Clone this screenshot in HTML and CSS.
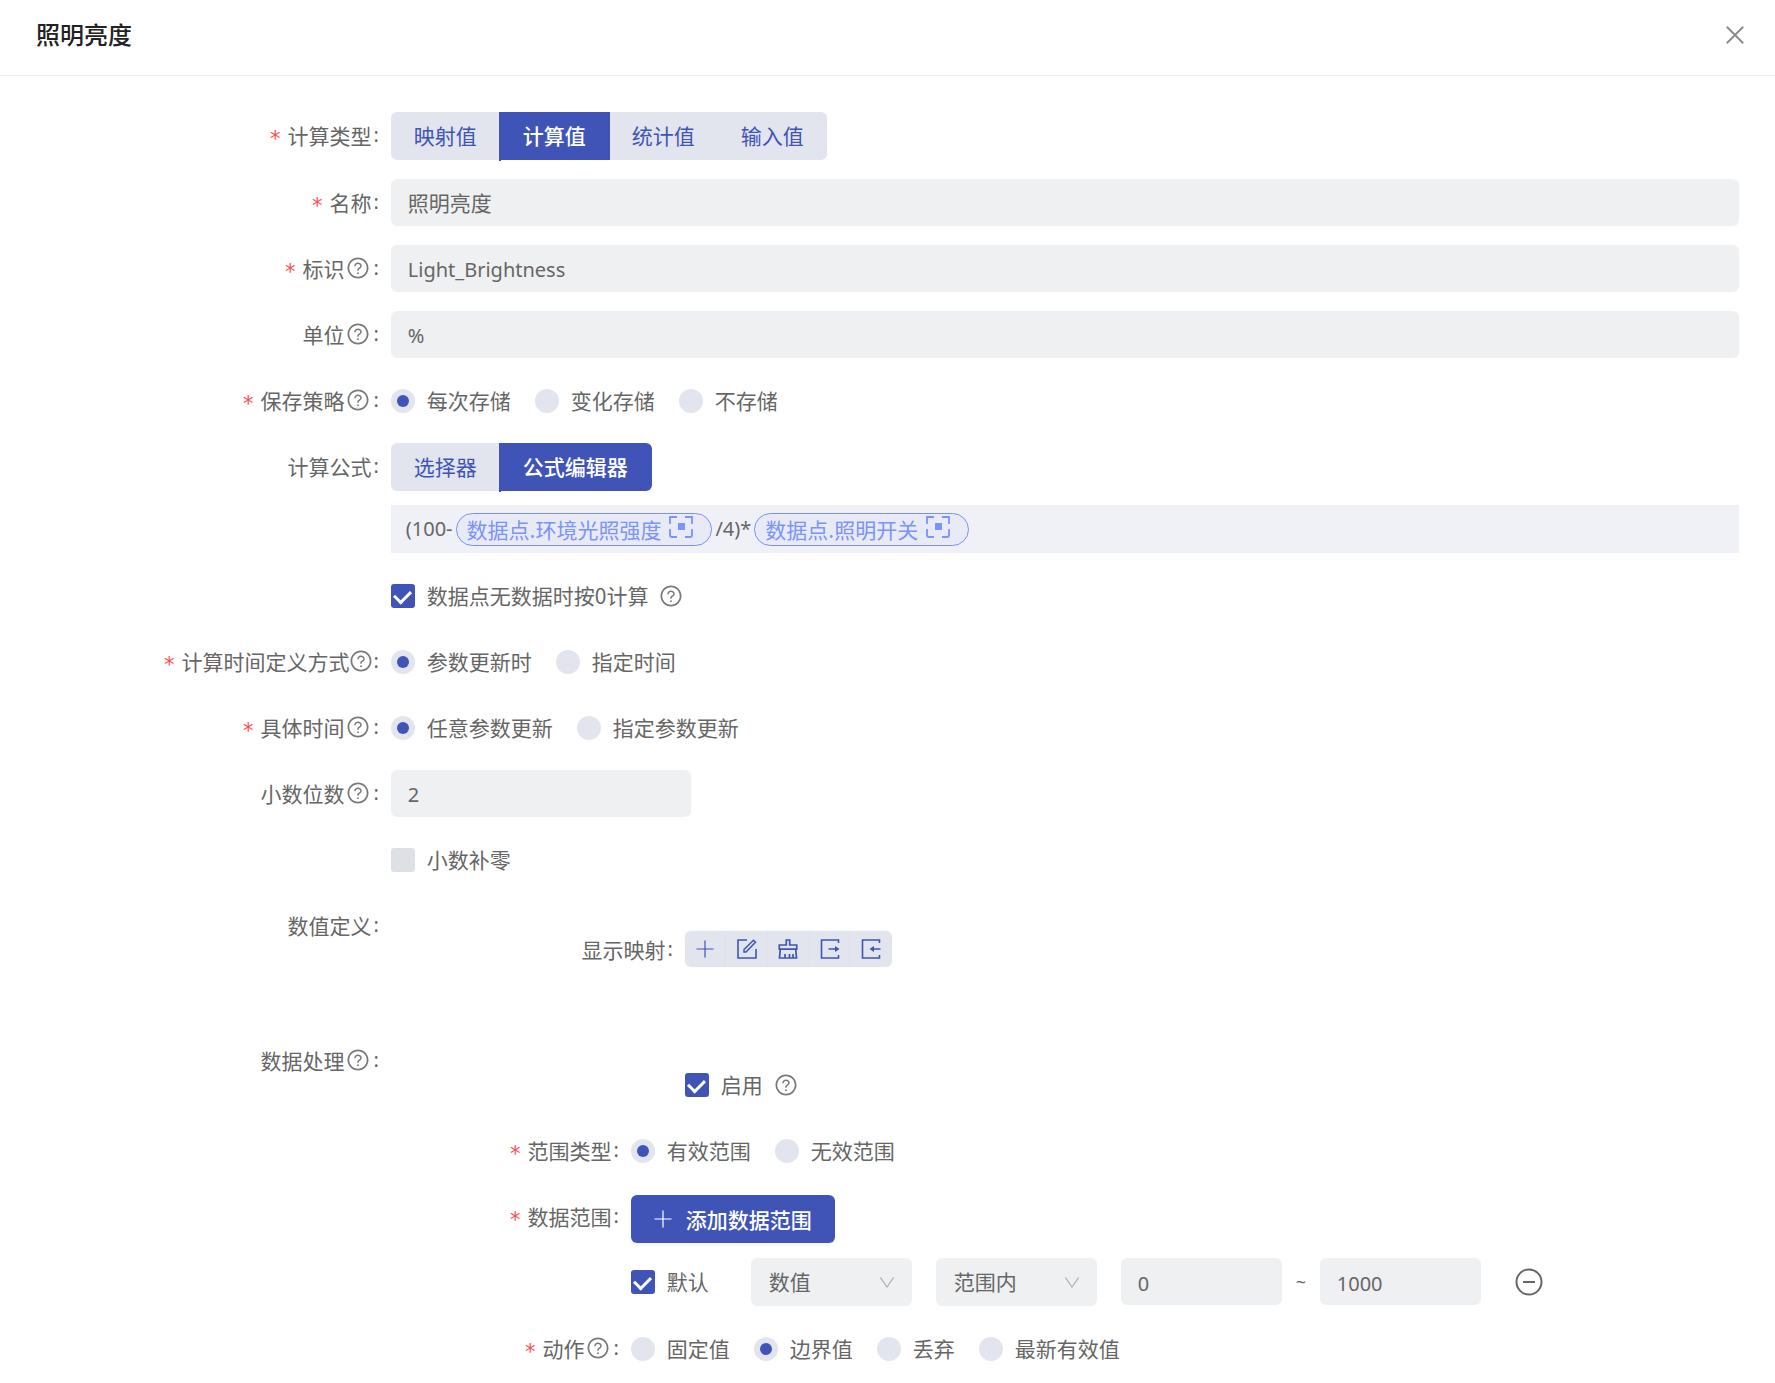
FILE: index.html
```html
<!DOCTYPE html>
<html lang="zh-CN">
<head>
<meta charset="utf-8">
<meta name="viewport" content="width=device-width, initial-scale=1">
<title>照明亮度</title>
<link rel="stylesheet" href="styles.css">
</head>
<body>
<svg class="sprite" aria-hidden="true">
  <symbol id="i-help" viewBox="0 0 1024 1024"><path d="M512 64C264.600 64 64 264.600 64 512s200.600 448 448 448 448-200.600 448-448S759.400 64 512 64zm0 820c-205.400 0-372-166.600-372-372s166.600-372 372-372 372 166.600 372 372-166.600 372-372 372z"/><path d="M623.600 316.700C593.600 290.400 554 276 512 276s-81.600 14.500-111.600 40.700C369.200 344 352 380.700 352 420v7.600c0 4.400 3.600 8 8 8h48c4.400 0 8-3.600 8-8V420c0-44.100 43.100-80 96-80s96 35.900 96 80c0 31.100-22 59.600-56.100 72.700-21.200 8.100-39.200 22.300-52.100 40.900-13.100 19-19.900 41.800-19.900 64.900V620c0 4.400 3.600 8 8 8h48c4.400 0 8-3.600 8-8v-22.700a48.300 48.300 0 0 1 30.900-44.800c59-22.700 97.100-74.700 97.100-132.500.1-39.300-17.100-76-48.300-103.300zM472 732a40 40 0 1 0 80 0 40 40 0 1 0-80 0z"/></symbol>
  <symbol id="i-focus" viewBox="0 0 24 22"><path d="M1 8V1h7M16 1h7v7M1 13v6q0 2 2 2h5M16 21h5q2 0 2-2v-6" fill="none" stroke="currentColor" stroke-width="1.800"/><rect x="9" y="7" width="7" height="7"/></symbol>
  <symbol id="i-plus" viewBox="0 0 18 18"><path d="M9 .5v17M.5 9h17" fill="none" stroke="currentColor" stroke-width="1.200"/></symbol>
</svg>

<header class="header">
  <h1 class="title">照明亮度</h1>
  <button type="button" class="close" aria-label="关闭">
    <svg width="18" height="18" viewBox="0 0 18 18"><path d="M.8.800l16.400 16.400M17.200.800L.800 17.200" fill="none" stroke="currentColor" stroke-width="2"/></svg>
  </button>
</header>

<form class="form">
  <div class="row row--first">
    <span class="label" id="l-type"><span class="star">*</span>计算类型<span class="colon">:</span></span>
    <div class="segments" role="group" aria-labelledby="l-type">
      <button type="button" class="segment">映射值</button>
      <button type="button" class="segment segment--on">计算值</button>
      <button type="button" class="segment">统计值</button>
      <button type="button" class="segment">输入值</button>
    </div>
  </div>

  <div class="row">
    <label class="label" for="name"><span class="star">*</span>名称<span class="colon">:</span></label>
    <input class="field field--cjk" id="name" type="text" value="照明亮度">
  </div>

  <div class="row">
    <label class="label" for="ident"><span class="star">*</span>标识<svg class="help"><use href="#i-help"/></svg><span class="colon">:</span></label>
    <input class="field" id="ident" type="text" value="Light_Brightness">
  </div>

  <div class="row">
    <label class="label" for="unit">单位<svg class="help"><use href="#i-help"/></svg><span class="colon">:</span></label>
    <input class="field" id="unit" type="text" value="%">
  </div>

  <div class="row">
    <span class="label" id="l-save"><span class="star">*</span>保存策略<svg class="help"><use href="#i-help"/></svg><span class="colon">:</span></span>
    <div class="options" role="radiogroup" aria-labelledby="l-save">
      <label class="option"><input class="radio" type="radio" name="save" checked>每次存储</label>
      <label class="option"><input class="radio" type="radio" name="save">变化存储</label>
      <label class="option"><input class="radio" type="radio" name="save">不存储</label>
    </div>
  </div>

  <div class="row">
    <span class="label" id="l-formula">计算公式<span class="colon">:</span></span>
    <div>
      <div class="segments" role="group" aria-labelledby="l-formula">
        <button type="button" class="segment">选择器</button>
        <button type="button" class="segment segment--on">公式编辑器</button>
      </div>
      <div class="editor" role="textbox" aria-labelledby="l-formula">
        <span>(100-</span>
        <span class="chip">数据点.环境光照强度<svg class="focus"><use href="#i-focus"/></svg></span>
        <span>/4)*</span>
        <span class="chip">数据点.照明开关<svg class="focus"><use href="#i-focus"/></svg></span>
      </div>
    </div>
  </div>

  <div class="row">
    <span></span>
    <div class="options">
      <label class="option"><input class="check" type="checkbox" checked>数据点无数据时按0计算</label>
      <svg class="help help--after"><use href="#i-help"/></svg>
    </div>
  </div>

  <div class="row">
    <span class="label label--tight" id="l-when"><span class="star">*</span>计算时间定义方式<svg class="help"><use href="#i-help"/></svg><span class="colon">:</span></span>
    <div class="options" role="radiogroup" aria-labelledby="l-when">
      <label class="option"><input class="radio" type="radio" name="when" checked>参数更新时</label>
      <label class="option"><input class="radio" type="radio" name="when">指定时间</label>
    </div>
  </div>

  <div class="row">
    <span class="label" id="l-time"><span class="star">*</span>具体时间<svg class="help"><use href="#i-help"/></svg><span class="colon">:</span></span>
    <div class="options" role="radiogroup" aria-labelledby="l-time">
      <label class="option"><input class="radio" type="radio" name="time" checked>任意参数更新</label>
      <label class="option"><input class="radio" type="radio" name="time">指定参数更新</label>
    </div>
  </div>

  <div class="row">
    <label class="label" for="digits">小数位数<svg class="help"><use href="#i-help"/></svg><span class="colon">:</span></label>
    <input class="field field--medium" id="digits" type="text" value="2">
  </div>

  <div class="row">
    <span></span>
    <div class="options">
      <label class="option"><input class="check" type="checkbox">小数补零</label>
    </div>
  </div>

  <div class="row">
    <span class="label">数值定义<span class="colon">:</span></span>
    <div class="panel panel--mapping">
      <div class="subrow subrow--wide">
        <span class="label" id="l-map">显示映射<span class="colon">:</span></span>
        <div class="toolbar" role="toolbar" aria-labelledby="l-map">
          <button type="button" class="tool" aria-label="添加"><svg width="18" height="18"><use href="#i-plus"/></svg></button>
          <button type="button" class="tool" aria-label="编辑"><svg width="20" height="20" viewBox="0 0 20 20"><path d="M10 1H1v18h18v-9" fill="none" stroke="currentColor" stroke-width="1.600"/><path d="M7 10.500L16.500 1.200l2 2L9 13H7z" fill="none" stroke="currentColor" stroke-width="1.500"/></svg></button>
          <button type="button" class="tool" aria-label="清空"><svg width="20" height="20" viewBox="0 0 20 20"><path d="M8.300 6V1h3.400v5h7v4.200H1.300V6zM2.300 10.200L1.500 19h17l-.8-8.800M7 19v-4M11.500 19v-4M15 19v-4" fill="none" stroke="currentColor" stroke-width="1.700"/></svg></button>
          <button type="button" class="tool" aria-label="导出"><svg width="20" height="20" viewBox="0 0 20 20"><path d="M18.500 4V1H1.500v18h17v-3M8.500 10h8" fill="none" stroke="currentColor" stroke-width="1.600"/><path d="M15 7l4.500 3-4.500 3z"/></svg></button>
          <button type="button" class="tool" aria-label="导入"><svg width="20" height="20" viewBox="0 0 20 20"><path d="M18.500 4V1H1.500v18h17v-3M11 10h8.500" fill="none" stroke="currentColor" stroke-width="1.600"/><path d="M13 7l-4.500 3 4.500 3z"/></svg></button>
        </div>
      </div>
    </div>
  </div>

  <div class="row">
    <span class="label">数据处理<svg class="help"><use href="#i-help"/></svg><span class="colon">:</span></span>
    <div class="panel">
      <div class="subrow subrow--wide">
        <span></span>
        <div class="options">
          <label class="option"><input class="check" type="checkbox" checked>启用</label>
          <svg class="help help--after"><use href="#i-help"/></svg>
        </div>
      </div>

      <div class="subrow">
        <span class="label" id="l-range"><span class="star">*</span>范围类型<span class="colon">:</span></span>
        <div class="options" role="radiogroup" aria-labelledby="l-range">
          <label class="option"><input class="radio" type="radio" name="range" checked>有效范围</label>
          <label class="option"><input class="radio" type="radio" name="range">无效范围</label>
        </div>
      </div>

      <div class="subrow">
        <span class="label"><span class="star">*</span>数据范围<span class="colon">:</span></span>
        <div class="ranges">
          <button type="button" class="add"><svg width="18" height="18"><use href="#i-plus"/></svg>添加数据范围</button>
          <div class="range">
            <label class="option range-default"><input class="check" type="checkbox" checked>默认</label>
            <div class="select">
              <select aria-label="类型"><option>数值</option></select>
              <svg class="arrow" viewBox="0 0 14 11"><path d="M.5.500L7 10 13.500.500" fill="none" stroke="currentColor" stroke-width="1.300"/></svg>
            </div>
            <div class="select">
              <select aria-label="条件"><option>范围内</option></select>
              <svg class="arrow" viewBox="0 0 14 11"><path d="M.5.500L7 10 13.500.500" fill="none" stroke="currentColor" stroke-width="1.300"/></svg>
            </div>
            <div class="limits">
              <input class="field field--small" type="text" value="0" aria-label="最小值">
              <span class="tilde">~</span>
              <input class="field field--small" type="text" value="1000" aria-label="最大值">
            </div>
            <button type="button" class="remove" aria-label="删除">
              <svg width="28" height="28" viewBox="0 0 28 28"><circle cx="14" cy="14" r="12.500" fill="none" stroke="currentColor" stroke-width="2"/><path d="M8 14h12" stroke="currentColor" stroke-width="2"/></svg>
            </button>
          </div>
        </div>
      </div>

      <div class="subrow">
        <span class="label" id="l-action"><span class="star">*</span>动作<svg class="help"><use href="#i-help"/></svg><span class="colon">:</span></span>
        <div class="options" role="radiogroup" aria-labelledby="l-action">
          <label class="option"><input class="radio" type="radio" name="action">固定值</label>
          <label class="option"><input class="radio" type="radio" name="action" checked>边界值</label>
          <label class="option"><input class="radio" type="radio" name="action">丢弃</label>
          <label class="option"><input class="radio" type="radio" name="action">最新有效值</label>
        </div>
      </div>
    </div>
  </div>
</form>
</body>
</html>
```

FILE: styles.css
```css
:root {
  --primary: #4054b8;
  --soft: #e2e5ed;
  --field: #eff0f2;
  --text: #666;
  --cjk: "Noto Sans CJK SC", "Noto Sans", sans-serif;
  --latin: "Noto Sans", "Noto Sans CJK SC", sans-serif;
}

* {
  box-sizing: border-box;
}

body {
  margin: 0;
  background: #fff;
  color: var(--text);
  font: 21px/32px var(--cjk);
}

svg {
  display: block;
  flex: none;
  fill: currentColor;
}

button,
input,
select {
  margin: 0;
  border: 0;
  font: inherit;
  color: inherit;
}

button {
  padding: 0;
  background: none;
  cursor: pointer;
}

.sprite {
  position: absolute;
  width: 0;
  height: 0;
}

/* Header */

.header {
  display: flex;
  align-items: center;
  justify-content: space-between;
  padding: 16px 31px 23px 36px;
  border-bottom: 1px solid #eee;
}

.title {
  margin: 0;
  font-size: 24px;
  font-weight: 500;
  line-height: 36px;
  color: #222;
}

.close {
  padding-top: 2px;
  color: #8c8c8c;
}

/* Form grid */

.form {
  padding: 36px 36px 0;
}

.row {
  display: grid;
  grid-template-columns: 5fr 19fr;
  align-items: start;
  min-height: 48px;
  margin-bottom: 18px;
}

.row > * {
  min-width: 0;
}

.row--first {
  min-height: 49px;
}

.row:last-child,
.subrow:last-child {
  margin-bottom: 0;
}

.subrow {
  display: grid;
  grid-template-columns: 240px 1fr;
  align-items: start;
  min-height: 48px;
  margin-bottom: 18px;
}

.subrow--wide {
  grid-template-columns: 294px 1fr;
}

.panel {
  padding-top: 24px;
}

.panel--mapping {
  padding-bottom: 45px;
}

.label {
  display: flex;
  align-items: center;
  justify-content: flex-end;
  height: 48px;
  padding-bottom: 2px;
  white-space: nowrap;
}

.star {
  padding-top: 8px;
  margin-right: 7px;
  font: 21px/32px "DejaVu Sans", sans-serif;
  color: #ff4d4f;
}

.colon {
  margin: 0 12px 0 2px;
  font: 20px/32px var(--latin);
}

.help {
  width: 24px;
  height: 24px;
  margin: 0 1px 0 2px;
  color: #7a7a7a;
}

.label--tight .help {
  margin: 0;
}

.label--tight .colon {
  margin-left: 0;
}

.help--after {
  margin: 0 0 1px 11px;
}

/* Segmented buttons */

.segments {
  display: flex;
}

.segment {
  height: 48px;
  padding: 0 23px 2px;
  background: var(--soft);
  color: var(--primary);
}

.segment--on {
  position: relative;
  margin: 0 -1px;
  padding: 0 24px 2px;
  background: var(--primary);
  color: #fff;
  font-weight: 500;
}

.segment--on:last-child {
  margin-right: 0;
}

.segment--on::before {
  content: "";
  position: absolute;
  top: 0;
  bottom: -1px;
  left: 0;
  width: 2px;
  background: var(--primary);
}

.segment:first-child {
  border-radius: 6px 0 0 6px;
}

.segment:last-child {
  border-radius: 0 6px 6px 0;
}

/* Fields */

.field {
  width: 100%;
  height: 47px;
  padding: 1px 17px 0;
  border-radius: 6px;
  background: var(--field);
  font: 20px/32px var(--latin);
}

.field--cjk {
  padding: 0 17px 2px;
  font: 21px/32px var(--cjk);
}

.field--medium {
  width: 300px;
}

.field--small {
  width: 161px;
  padding-top: 3px;
}

.options {
  display: flex;
  align-items: center;
  height: 48px;
}

.option {
  display: flex;
  align-items: center;
  gap: 12px;
  padding-bottom: 2px;
  white-space: nowrap;
}

.option + .option {
  margin-left: 24px;
}

.radio,
.check {
  appearance: none;
  flex: none;
  display: grid;
  place-items: center;
  width: 24px;
  height: 24px;
  margin-top: 2px;
}

.radio {
  border-radius: 50%;
  background: var(--soft);
}

.radio:checked::before {
  content: "";
  width: 12px;
  height: 12px;
  border-radius: 50%;
  background: var(--primary);
}

.check {
  border-radius: 3px;
  background: #dde1e6;
}

.check:checked {
  background: var(--primary);
}

.check:checked::before {
  content: "";
  width: 8px;
  height: 13px;
  margin-bottom: 2px;
  border: solid #fff;
  border-width: 0 3px 3px 0;
  transform: rotate(45deg);
}

/* Formula editor */

.editor {
  display: flex;
  align-items: center;
  gap: 3px;
  height: 48px;
  margin: 14px 0 1px;
  padding: 0 15px;
  background: #eff1f6;
  font: 20px/32px var(--latin);
}

.chip {
  display: flex;
  align-items: center;
  height: 33px;
  padding: 0 18px 0 10px;
  border: 1px solid #7b90f7;
  border-radius: 17px;
  background: #e8eaf6;
  color: #7b93fc;
  font: 21px/30px var(--cjk);
  white-space: nowrap;
}

.focus {
  width: 24px;
  height: 22px;
  margin: 0 0 4px 8px;
}

/* Mapping toolbar */

.toolbar {
  display: flex;
  width: 207px;
  margin-top: 5px;
}

.tool {
  flex: 1;
  display: grid;
  place-items: center;
  height: 36px;
  background: var(--soft);
  color: var(--primary);
  box-shadow: 0 0 3px rgba(0, 0, 0, 0.04);
}

.tool:first-child {
  border-radius: 6px 0 0 6px;
}

.tool:last-child {
  border-radius: 0 6px 6px 0;
}

/* Data ranges */

.add {
  display: flex;
  align-items: center;
  gap: 14px;
  height: 48px;
  margin-top: 2px;
  padding: 0 23px;
  border-radius: 6px;
  background: var(--primary);
  box-shadow: 0 3px 0 rgba(0, 0, 0, 0.03);
  color: #fff;
  font-weight: 500;
}

.range {
  display: flex;
  align-items: center;
  gap: 24px;
  height: 48px;
  margin: 15px 0 1px;
}

.range-default {
  width: 96px;
}

.select {
  display: grid;
  align-items: center;
  width: 161px;
}

.select > * {
  grid-area: 1 / 1;
}

.select select {
  appearance: none;
  width: 100%;
  height: 48px;
  padding: 0 18px 2px;
  border-radius: 6px;
  background: var(--field);
}

.arrow {
  justify-self: end;
  width: 14px;
  height: 11px;
  margin-right: 18px;
  color: #b3b3b3;
  pointer-events: none;
}

.limits {
  display: flex;
  align-self: flex-start;
  align-items: center;
}

.tilde {
  width: 38px;
  text-align: center;
  font: 18px/32px var(--latin);
}

.remove {
  margin-left: 10px;
}
```
